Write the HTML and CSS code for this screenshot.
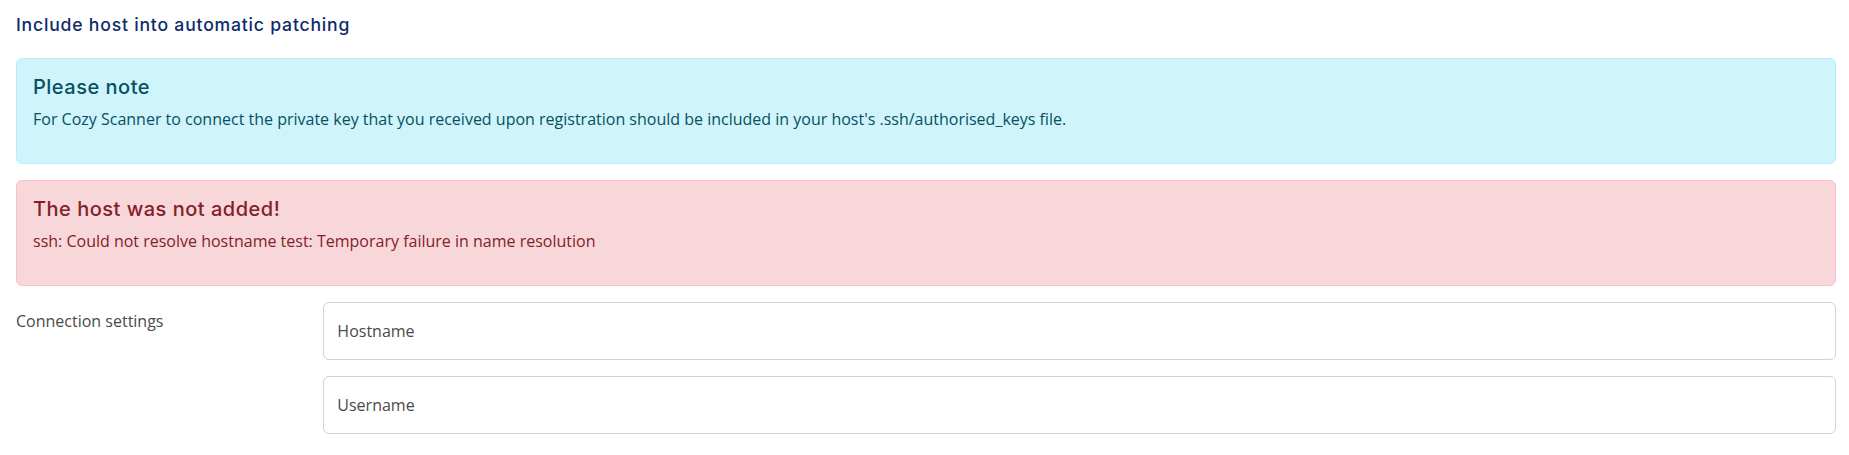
FILE: index.html
```html
<!DOCTYPE html>
<html lang="en">
<head>
<meta charset="utf-8">
<title>Include host into automatic patching</title>
<link rel="stylesheet" href="styles.css">
</head>
<body>
<main class="page">
  <h2 class="page-title">Include host into automatic patching</h2>

  <div class="alert alert-info">
    <h4 class="alert-heading">Please note</h4>
    <p>For Cozy Scanner to connect the private key that you received upon registration should be included in your host's .ssh/authorised_keys file.</p>
  </div>

  <div class="alert alert-danger">
    <h4 class="alert-heading">The host was not added!</h4>
    <p>ssh: Could not resolve hostname test: Temporary failure in name resolution</p>
  </div>

  <div class="form-row">
    <label class="form-label">Connection settings</label>
    <div class="fields">
      <input class="form-control" type="text" placeholder="Hostname">
      <input class="form-control" type="text" placeholder="Username">
    </div>
  </div>
</main>
</body>
</html>
```

FILE: styles.css
```css
* { box-sizing: border-box; }

html, body {
  margin: 0;
  padding: 0;
  background: #ffffff;
}

body {
  font-family: "Open Sans", "Noto Sans", sans-serif;
  font-size: 16px;
  line-height: 1.5;
  color: #495057;
}

.page {
  padding: 0 13px 0 16px;
}

.page-title {
  margin: 14px 0 23px;
  font-family: Inter, "Noto Sans", sans-serif;
  font-weight: 500;
  font-size: 17.6px;
  line-height: 21px;
  color: #0f2a6c;
  letter-spacing: 0.8px;
}

.alert {
  border: 1px solid transparent;
  border-radius: 6px;
  padding: 16px;
  margin-bottom: 16px;
}

.alert-heading {
  margin: 0 0 8px;
  font-family: Inter, "Noto Sans", sans-serif;
  font-weight: 500;
  font-size: 20px;
  line-height: 24px;
  letter-spacing: 0.5px;
}

.alert p {
  margin: 0 0 16px;
}

.alert-info {
  background: #cff4fc;
  border-color: #b6effb;
  color: #055160;
}

.alert-danger {
  background: #f8d7da;
  border-color: #f5c2c7;
  color: #842029;
}

.form-row {
  display: grid;
  grid-template-columns: calc((100% + 24px) / 6 - 24px) 1fr;
  column-gap: 24px;
}

.form-label {
  padding-top: 7px;
  color: #4a4a4a;
}

.fields {
  display: flex;
  flex-direction: column;
  gap: 16px;
}

.form-control {
  display: block;
  width: 100%;
  height: 58px;
  padding: 0 13px;
  font-family: "Open Sans", "Noto Sans", sans-serif;
  font-size: 16px;
  color: #495057;
  background: #fff;
  border: 1px solid #ced4da;
  border-radius: 6px;
  outline: none;
}

.form-control::placeholder {
  color: #4a4a4a;
  opacity: 1;
}
```
